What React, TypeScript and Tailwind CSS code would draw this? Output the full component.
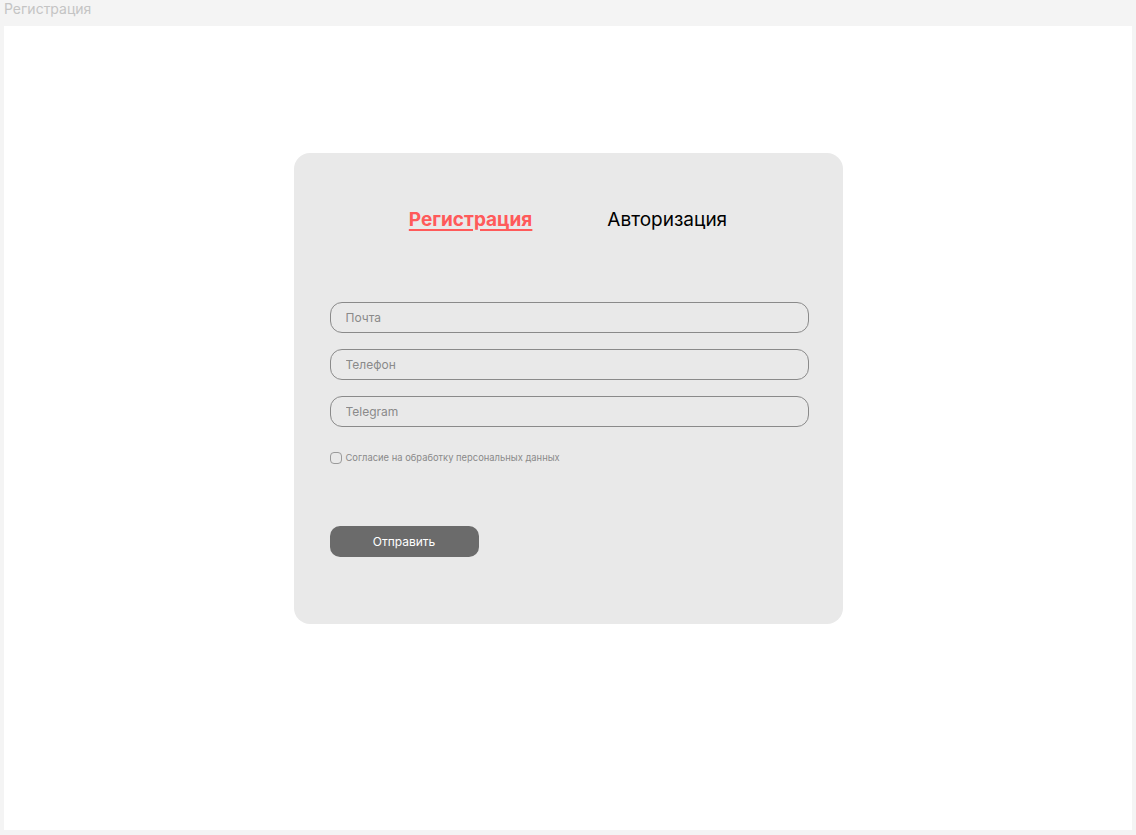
import { useState } from "react";

const inputs = ["Почта", "Телефон", "Telegram"];

export default function App() {
  const [agree, setAgree] = useState(false);

  return (
    <div className="min-h-[835px] bg-[#f4f4f4] flex flex-col font-['Inter','Liberation_Sans',sans-serif]">
      {/* Frame title */}
      <div className="h-[26px] pl-[4px] pt-[1px] text-[14px] leading-[16px] text-[#c4c4c4]">
        Регистрация
      </div>

      {/* Frame */}
      <div className="mx-[4px] mb-[5px] h-[804px] bg-white flex justify-center">
        <div className="mt-[127px] w-[549px] h-[471px] rounded-[16px] bg-[#e9e9e9] px-[36px] pt-[56px] flex flex-col">
          {/* Tabs */}
          <div className="flex justify-center gap-[75px] text-[19px] leading-[22px]">
            <button className="font-bold text-[#ff5a5a] underline underline-offset-[3px] decoration-[1.5px]">
              Регистрация
            </button>
            <button className="text-black">Авторизация</button>
          </div>

          {/* Fields */}
          <div className="mt-[71px] flex flex-col gap-[16px]">
            {inputs.map((p) => (
              <input
                key={p}
                placeholder={p}
                className="w-[479px] h-[31px] rounded-[12px] border border-[#8a8a8a] bg-transparent px-[15px] text-[12px] text-[#444] placeholder:text-[#8a8a8a] outline-none"
              />
            ))}
          </div>

          {/* Consent */}
          <label className="mt-[25px] flex items-center gap-[4px] text-[9.4px] leading-[12px] text-[#8a8a8a] cursor-pointer">
            <input
              type="checkbox"
              checked={agree}
              onChange={(e) => setAgree(e.target.checked)}
              className="appearance-none w-[12px] h-[12px] rounded-[4px] border border-[#9a9a9a] bg-transparent checked:bg-[#6b6b6b]"
            />
            Согласие на обработку персональных данных
          </label>

          {/* Submit */}
          <button className="mt-[62px] w-[149px] h-[31px] rounded-[10px] bg-[#6b6b6b] text-white text-[12px]">
            Отправить
          </button>
        </div>
      </div>
    </div>
  );
}
